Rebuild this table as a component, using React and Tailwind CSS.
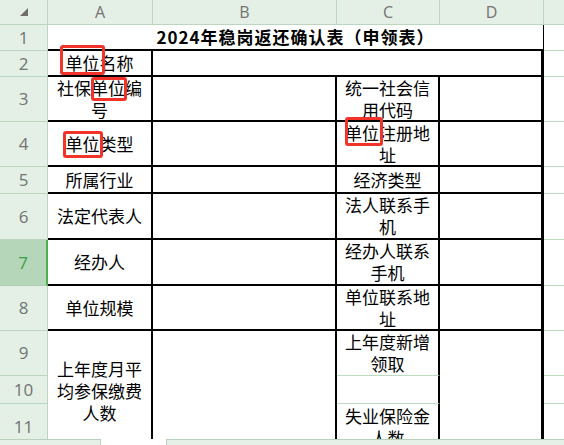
import clsx from 'clsx';

const GRID = 'border-[#bcdcc0]';

function Cell({ className, children }) {
  return (
    <div
      className={clsx(
        'flex items-center justify-center text-center px-[2px] bg-white text-black',
        "font-['Noto_Sans_CJK_SC',sans-serif] text-[17px] leading-[22px]",
        className
      )}
    >
      <span>{children}</span>
    </div>
  );
}

function RowHead({ n, className, selected }) {
  return (
    <div
      className={clsx(
        "flex items-center justify-center font-['Open_Sans',sans-serif] text-[17px] border-b",
        selected
          ? 'bg-[#b6d6ba] text-[#3c9e46] border-[#a9cdae] border-r-2 border-r-[#4caf50]'
          : 'bg-[#e4efe5] text-[#737373] border-[#bcd5bf] border-r',
        className
      )}
    >
      {n}
    </div>
  );
}

function ColHead({ label, className }) {
  return (
    <div
      className={clsx(
        "flex items-center justify-center bg-[#e4efe5] text-[#737373] font-['Open_Sans',sans-serif] text-[16px] border-r border-b border-[#bcd5bf]",
        className
      )}
    >
      {label}
    </div>
  );
}

function RedMark({ className }) {
  return <div className={clsx('absolute border-[3px] border-[#f2332a] rounded-[3px]', className)} />;
}

export default function App() {
  return (
    <div className="w-[564px] h-[445px] flex flex-col overflow-hidden bg-white">
      <div className="relative h-[439px] overflow-hidden">
        <div className="grid grid-cols-[48px_105px_184px_103px_104px_1fr] grid-rows-[25px_26px_26px_45px_45px_27px_46px_46px_45px_45px_28px_46px]">
          {/* header row */}
          <div className="col-start-1 row-start-1 bg-[#e4efe5] border-r border-b border-[#bcd5bf] pl-[20px] pt-[8px]">
            <svg width="8" height="8" viewBox="0 0 8 8">
              <polygon points="8,0 8,8 0,8" fill="#6f6f6f" />
            </svg>
          </div>
          <ColHead label="A" className="col-start-2 row-start-1" />
          <ColHead label="B" className="col-start-3 row-start-1" />
          <ColHead label="C" className="col-start-4 row-start-1" />
          <ColHead label="D" className="col-start-5 row-start-1" />
          <ColHead label="" className="col-start-6 row-start-1 border-r-0" />

          {/* row headers */}
          <RowHead n="1" className="col-start-1 row-start-2" />
          <RowHead n="2" className="col-start-1 row-start-3" />
          <RowHead n="3" className="col-start-1 row-start-4" />
          <RowHead n="4" className="col-start-1 row-start-5" />
          <RowHead n="5" className="col-start-1 row-start-6" />
          <RowHead n="6" className="col-start-1 row-start-7" />
          <RowHead n="7" className="col-start-1 row-start-8" selected />
          <RowHead n="8" className="col-start-1 row-start-9" />
          <RowHead n="9" className="col-start-1 row-start-10" />
          <RowHead n="10" className="col-start-1 row-start-11" />
          <RowHead n="11" className="col-start-1 row-start-12" />

          {/* row 1 title */}
          <Cell className="col-start-2 col-span-4 row-start-2 border-b-2 border-r border-black font-bold font-['Liberation_Serif','Noto_Sans_CJK_SC',serif] tracking-[1px]">
            2024年稳岗返还确认表（申领表）
          </Cell>

          {/* row 2 */}
          <Cell className="col-start-2 row-start-3 border-r-2 border-b-2 border-black">单位名称</Cell>
          <Cell className="col-start-3 col-span-3 row-start-3 border-r-[3px] border-b-2 border-black" />

          {/* rows 3-8 */}
          <Cell className="col-start-2 row-start-4 border-r-2 border-b-2 border-black">社保单位编号</Cell>
          <Cell className="col-start-3 row-start-4 border-r-2 border-b-2 border-black" />
          <Cell className="col-start-4 row-start-4 border-r-2 border-b-2 border-black">统一社会信用代码</Cell>
          <Cell className="col-start-5 row-start-4 border-r-[3px] border-b-2 border-black" />

          <Cell className="col-start-2 row-start-5 border-r-2 border-b-2 border-black">单位类型</Cell>
          <Cell className="col-start-3 row-start-5 border-r-2 border-b-2 border-black" />
          <Cell className="col-start-4 row-start-5 border-r-2 border-b-2 border-black">单位注册地址</Cell>
          <Cell className="col-start-5 row-start-5 border-r-[3px] border-b-2 border-black" />

          <Cell className="col-start-2 row-start-6 border-r-2 border-b-2 border-black">所属行业</Cell>
          <Cell className="col-start-3 row-start-6 border-r-2 border-b-2 border-black" />
          <Cell className="col-start-4 row-start-6 border-r-2 border-b-2 border-black">经济类型</Cell>
          <Cell className="col-start-5 row-start-6 border-r-[3px] border-b-2 border-black" />

          <Cell className="col-start-2 row-start-7 border-r-2 border-b-2 border-black">法定代表人</Cell>
          <Cell className="col-start-3 row-start-7 border-r-2 border-b-2 border-black" />
          <Cell className="col-start-4 row-start-7 border-r-2 border-b-2 border-black">法人联系手机</Cell>
          <Cell className="col-start-5 row-start-7 border-r-[3px] border-b-2 border-black" />

          <Cell className="col-start-2 row-start-8 border-r-2 border-b-2 border-black">经办人</Cell>
          <Cell className="col-start-3 row-start-8 border-r-2 border-b-2 border-black" />
          <Cell className="col-start-4 row-start-8 border-r-2 border-b-2 border-black">经办人联系手机</Cell>
          <Cell className="col-start-5 row-start-8 border-r-[3px] border-b-2 border-black" />

          <Cell className="col-start-2 row-start-9 border-r-2 border-b-2 border-black">单位规模</Cell>
          <Cell className="col-start-3 row-start-9 border-r-2 border-b-2 border-black" />
          <Cell className="col-start-4 row-start-9 border-r-2 border-b-2 border-black">单位联系地址</Cell>
          <Cell className="col-start-5 row-start-9 border-r-[3px] border-b-2 border-black" />

          {/* rows 9-11 */}
          <Cell className="col-start-2 row-start-10 row-span-3 border-r-2 border-black">上年度月平均参保缴费人数</Cell>
          <Cell className="col-start-3 row-start-10 row-span-3 border-r-2 border-black" />
          <Cell className={clsx('col-start-4 row-start-10 border-r-2 border-r-black border-b', GRID)}>上年度新增领取</Cell>
          <Cell className={clsx('col-start-4 row-start-11 border-r-2 border-r-black border-b', GRID)} />
          <Cell className="col-start-4 row-start-12 border-r-2 border-black">失业保险金人数</Cell>
          <Cell className="col-start-5 row-start-10 row-span-3 border-r-[3px] border-black" />

          {/* column E */}
          {[2, 3, 4, 5, 6, 7, 8, 9, 10, 11, 12].map((r) => (
            <div
              key={r}
              className={clsx('col-start-6 bg-white border-b', GRID)}
              style={{ gridRowStart: r }}
            />
          ))}
        </div>

        <RedMark className="left-[60px] top-[45px] w-[45px] h-[30px]" />
        <RedMark className="left-[91px] top-[77px] w-[36px] h-[24px]" />
        <RedMark className="left-[63px] top-[131px] w-[40px] h-[27px]" />
        <RedMark className="left-[345px] top-[117px] w-[38px] h-[29px]" />
      </div>

      <div className="flex h-[6px]">
        <div className="w-[101px] bg-[#e6f0e7] border-t border-r border-[#b9d1bc]" />
        <div className="w-[65px] bg-white" />
        <div className="flex-1 bg-[#e6f0e7] border-t border-l border-[#b9d1bc]" />
      </div>
    </div>
  );
}
